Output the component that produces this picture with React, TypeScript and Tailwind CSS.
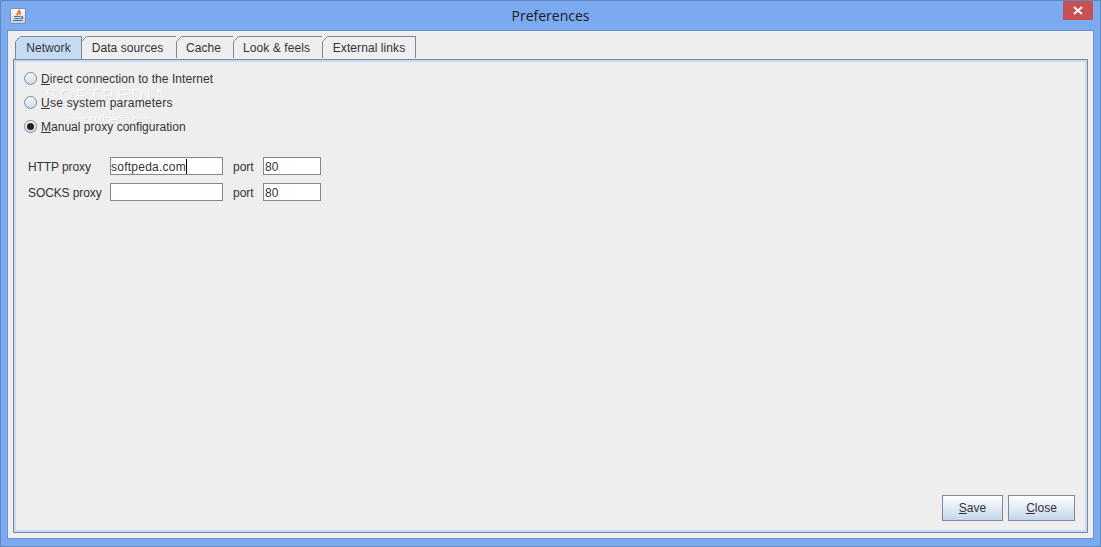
const tabs = [
  { label: 'Network', width: 'w-[67px]', pad: '' },
  { label: 'Data sources', width: 'w-[96px]', pad: 'pr-[3px]' },
  { label: 'Cache', width: 'w-[58px]', pad: 'pr-[3px]' },
  { label: 'Look & feels', width: 'w-[90px]', pad: 'pr-[3px]' },
  { label: 'External links', width: 'w-[94px]', pad: '' },
]

function JavaIcon() {
  return (
    <svg width="16" height="16" viewBox="0 0 16 16">
      <defs>
        <linearGradient id="page" x1="0" y1="0" x2="0" y2="1">
          <stop offset="0" stopColor="#ffffff" />
          <stop offset="1" stopColor="#c3d0dc" />
        </linearGradient>
      </defs>
      <rect x="0.5" y="0.5" width="15" height="15" rx="1.5" fill="url(#page)" stroke="#7f8e9c" />
      <path d="M9 1.5 C10.5 3.5 6 4.5 7.5 7.5 M10.5 3.5 C9.5 5 9.5 6 10 7" fill="none" stroke="#e06a1c" strokeWidth="1.6" />
      <path d="M4 8.5 H10.5 M4.5 10.5 H10 M11 8.8 H12.5 V10.5 H10.5 M3 12.5 H12.5" fill="none" stroke="#3f6f9a" strokeWidth="1.2" />
    </svg>
  )
}

function Tab({ label, width, pad, active }: { label: string; width: string; pad: string; active: boolean }) {
  return (
    <div
      className={`relative ${width} ${pad} -mr-px flex items-center justify-center border border-b-0 border-[#7a8a99] ${
        active ? 'bg-[#c6dbf3] z-10 h-[23px]' : 'bg-[#eeeeee] h-[22px]'
      }`}
    >
      <svg className="absolute -left-px -top-px" width="6" height="6" viewBox="0 0 6 6">
        <polygon points="0,0 6,0 0,6" fill="#eeeeee" />
        <line x1="0.5" y1="5.5" x2="5.5" y2="0.5" stroke="#7a8a99" />
      </svg>
      <span className="text-[12px] tracking-[0.08px] text-[#333333]">{label}</span>
    </div>
  )
}

function Radio({ mnemonic, rest, tracking, checked }: { mnemonic: string; rest: string; tracking: string; checked?: boolean }) {
  return (
    <div className="flex h-6 items-center gap-[4px]">
      <span className="flex h-[13px] w-[13px] items-center justify-center rounded-full border border-[#7a8a99] bg-gradient-to-b from-[#f8fbfe] to-[#ccdcee]">
        {checked && <span className="h-[7px] w-[7px] rounded-full bg-[#222222]" />}
      </span>
      <span className={`pt-px text-[12px] text-[#333333] ${tracking}`}>
        <span className="underline">{mnemonic}</span>
        {rest}
      </span>
    </div>
  )
}

function ProxyRow({ label, value, caret }: { label: string; value: string; caret?: boolean }) {
  return (
    <div className="flex h-[18px] items-center text-[12px] text-[#333333]">
      <span className="w-[82px] pt-px tracking-[-0.1px]">{label}</span>
      <div className="flex h-[18px] w-[113px] items-center border border-[#7a8a99] bg-white pt-px tracking-[0.25px]">
        {value}
        {caret && <span className="h-[15px] w-px bg-black" />}
      </div>
      <span className="ml-[10px] w-[30px] pt-px">port</span>
      <div className="flex h-[18px] w-[58px] items-center border border-[#7a8a99] bg-white pl-[1px] pt-px">80</div>
    </div>
  )
}

function ActionButton({ mnemonic, rest, width }: { mnemonic: string; rest: string; width: string }) {
  return (
    <button className={`h-[26px] ${width} border border-[#7a8a99] bg-gradient-to-b from-white to-[#c4d6ea] text-[12px] text-[#333333]`}>
      <span className="underline">{mnemonic}</span>
      {rest}
    </button>
  )
}

export default function App() {
  return (
    <div className="flex h-[547px] w-[1101px] flex-col border border-[#5f87c0] bg-[#7baaf0] font-['Liberation_Sans',Arial,sans-serif]">
      <div className="relative flex h-[29px] shrink-0 items-center justify-center">
        <div className="absolute left-[9px] top-[7px]">
          <JavaIcon />
        </div>
        <span className="font-['Open_Sans',sans-serif] text-[14px] text-[#1a1a1a]">Preferences</span>
        <div className="absolute right-[7px] top-0 flex h-[19px] w-[30px] items-center justify-center bg-[#c75050]">
          <svg width="10" height="9" viewBox="0 0 10 9">
            <path d="M1 1 L9 8 M9 1 L1 8" stroke="white" strokeWidth="2" />
          </svg>
        </div>
      </div>

      <div className="mx-[6px] flex h-[509px] flex-col border border-[#6b93cf] bg-[#eeeeee] px-[5px] pb-[5px] pt-[5px]">
        <div className="flex pl-[2px]">
          {tabs.map((t) => (
            <Tab key={t.label} {...t} active={t.label === 'Network'} />
          ))}
        </div>

        <div className="relative flex-1 border border-[#7a8a99]">
          <span className="absolute left-[31px] top-[27px] text-[17px] leading-none tracking-[3px] text-white/70 [text-shadow:1px_1px_0_#e2e2e2]">
            SOFTPEDIA
          </span>
          <span className="absolute left-[51px] top-[55px] text-[10px] leading-none text-white/80 [text-shadow:1px_1px_0_#d8d8d8]">
            www.softpedia.com
          </span>

          <div className="relative flex h-full flex-col border-[2px] border-[#c6dbf3] pl-[8px] pr-[9px] pt-[4px]">
            <Radio mnemonic="D" rest="irect connection to the Internet" tracking="tracking-[0.06px]" />
            <Radio mnemonic="U" rest="se system parameters" tracking="tracking-[0.24px]" />
            <Radio mnemonic="M" rest="anual proxy configuration" tracking="tracking-[0.02px]" checked />

            <div className="mt-[19px] flex flex-col gap-2 pl-[4px]">
              <ProxyRow label="HTTP proxy" value="softpeda.com" caret />
              <ProxyRow label="SOCKS proxy" value="" />
            </div>

            <div className="mt-auto flex justify-end gap-[5px] pb-[9px] pr-[1px]">
              <ActionButton mnemonic="S" rest="ave" width="w-[61px]" />
              <ActionButton mnemonic="C" rest="lose" width="w-[67px]" />
            </div>
          </div>
        </div>
      </div>
    </div>
  )
}
